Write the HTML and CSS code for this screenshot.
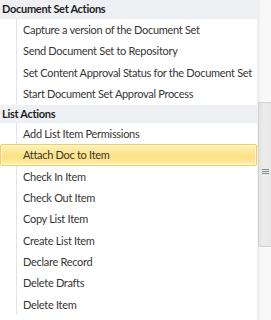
FILE: index.html
```html
<!DOCTYPE html>
<html>
<head>
  <meta charset="UTF-8">
  <title>Custom Actions</title>
  <link rel="stylesheet" href="styles.css">
</head>
<body>
<div class="panel">
  <div class="menu">
    <div class="group-title">Document Set Actions</div>
    <div class="item">Capture a version of the Document Set</div>
    <div class="item">Send Document Set to Repository</div>
    <div class="item">Set Content Approval Status for the Document Set</div>
    <div class="item">Start Document Set Approval Process</div>
    <div class="group-title second">List Actions</div>
    <div class="item">Add List Item Permissions</div>
    <div class="item selected">Attach Doc to Item</div>
    <div class="item">Check In Item</div>
    <div class="item">Check Out Item</div>
    <div class="item">Copy List Item</div>
    <div class="item">Create List Item</div>
    <div class="item">Declare Record</div>
    <div class="item">Delete Drafts</div>
    <div class="item">Delete Item</div>
  </div>
  <div class="scrollbar">
    <div class="thumb"><span class="grip"></span></div>
  </div>
</div>
</body>
</html>
```
FILE: styles.css
```css
body {
  margin: 0;
  background-color: #ffffff;
  font-family: Lato, "Noto Sans", sans-serif;
  font-size: 11px;
  letter-spacing: -0.3px;
  color: #363636;
}

.panel {
  display: flex;
  width: 271px;
  height: 320px;
  overflow: hidden;
}

.menu {
  width: 257px;
  flex: none;
}

.group-title {
  height: 19px;
  line-height: 18px;
  padding-left: 2px;
  background-color: #eef0f4;
  font-weight: 700;
  color: #1e1e1e;
}

.group-title.second {
  height: 18px;
  line-height: 18px;
  margin-top: 1px;
}

.item {
  height: 21.3px;
  line-height: 21px;
  padding-left: 23px;
  box-sizing: border-box;
  white-space: nowrap;
  background: linear-gradient(to right, transparent 16px, #e2e4e8 16px, #e2e4e8 17px, transparent 17px);
}

.item.selected {
  border: 1px solid #f2cd63;
  border-radius: 2px;
  padding-left: 22px;
  line-height: 19px;
  background: linear-gradient(to bottom, #fef1bd 0%, #fde58c 45%, #fde287 70%, #fff0b8 100%);
  box-shadow: inset 0 0 0 1px #fff7d9;
}

.scrollbar {
  flex: 1;
  background: linear-gradient(to right, #ececec, #f8f8f8 3px, #f9f9f9);
  border-left: 1px solid #f0f0f0;
}

.thumb {
  margin-top: 102px;
  height: 143px;
  background: linear-gradient(to right, #e3e3e3, #ececec 40%, #e6e6e6);
  border: 1px solid #d3d3d3;
  border-right: none;
  display: flex;
  align-items: center;
  justify-content: center;
}

.grip {
  display: block;
  width: 7px;
  height: 6px;
  margin-top: -6px;
  background: repeating-linear-gradient(to bottom, #8c8c8c 0, #8c8c8c 1px, transparent 1px, transparent 2px);
}
```
